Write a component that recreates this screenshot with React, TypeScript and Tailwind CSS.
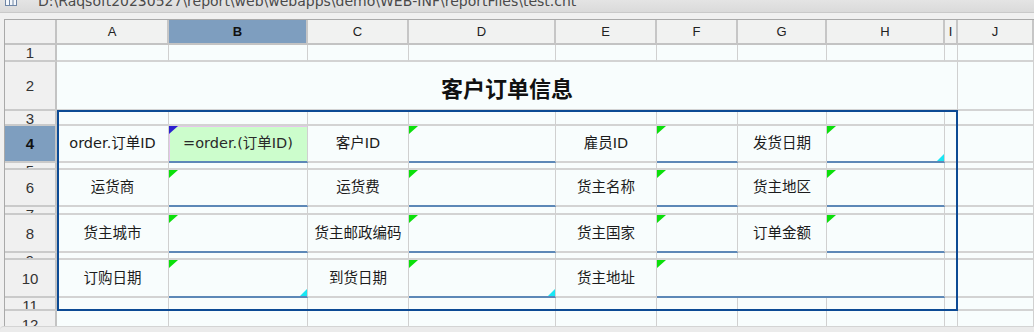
import React from 'react';

type Cell =
  | { k: 'e' }
  | { k: 'l'; t: string }
  | { k: 'v'; cyan?: boolean; span3?: boolean }
  | { k: 'title' }
  | { k: 'f' };

const E: Cell = { k: 'e' };
const L = (t: string): Cell => ({ k: 'l', t });
const V = (o: { cyan?: boolean; span3?: boolean } = {}): Cell => ({ k: 'v', ...o });
const empties = (n: number): Cell[] => Array.from({ length: n }, () => E);

const rows: { n: string; sel?: boolean; cells: Cell[] }[] = [
  { n: '1', cells: empties(10) },
  { n: '2', cells: [{ k: 'title' }, E] },
  { n: '3', cells: empties(10) },
  {
    n: '4',
    sel: true,
    cells: [L('order.订单ID'), { k: 'f' }, L('客户ID'), V(), L('雇员ID'), V(), L('发货日期'), V({ cyan: true }), E, E],
  },
  { n: '5', cells: empties(10) },
  { n: '6', cells: [L('运货商'), V(), L('运货费'), V(), L('货主名称'), V(), L('货主地区'), V(), E, E] },
  { n: '7', cells: empties(10) },
  { n: '8', cells: [L('货主城市'), V(), L('货主邮政编码'), V(), L('货主国家'), V(), L('订单金额'), V(), E, E] },
  { n: '9', cells: empties(10) },
  {
    n: '10',
    cells: [L('订购日期'), V({ cyan: true }), L('到货日期'), V({ cyan: true }), L('货主地址'), V({ span3: true }), E, E],
  },
  { n: '11', cells: empties(10) },
  { n: '12', cells: empties(10) },
];

const colLetters = ['A', 'B', 'C', 'D', 'E', 'F', 'G', 'H', 'I', 'J'];

const GRID =
  'grid grid-cols-[52px_112px_139px_101px_147px_101px_81px_89px_118px_13px_76px] grid-rows-[25px_17px_49px_15px_37px_7px_37px_8px_38px_7px_38px_13px_28px]';

const base = 'border-r border-r-[#d0d0d0] border-b-2 border-b-[#d3d3d3] bg-[#f8fdfd]';
const labelFont = { fontFamily: '"DejaVu Sans", "Noto Sans CJK SC", sans-serif' };

function GreenTri({ color = 'green' }: { color?: 'green' | 'blue' }) {
  return (
    <span
      className={
        color === 'green'
          ? 'absolute left-0 top-0 h-0 w-0 border-t-[8px] border-t-[#0be00b] border-r-[9px] border-r-transparent'
          : 'absolute left-0 top-0 h-0 w-0 border-t-[8px] border-t-[#2b1fcf] border-r-[9px] border-r-transparent'
      }
    />
  );
}

function CyanTri() {
  return (
    <span className="absolute right-0 bottom-0 h-0 w-0 border-b-[7px] border-b-[#18e6f4] border-l-[7px] border-l-transparent" />
  );
}

function BodyCell({ c }: { c: Cell }) {
  if (c.k === 'e') return <div className={base} />;
  if (c.k === 'title')
    return (
      <div className={`${base} col-span-9 flex items-center justify-center pt-[2px]`}>
        <span
          className="text-[22px] font-bold leading-none text-[#111]"
          style={{ fontFamily: '"Noto Sans CJK SC", sans-serif' }}
        >
          客户订单信息
        </span>
      </div>
    );
  if (c.k === 'l')
    return (
      <div className={`${base} flex items-center justify-center overflow-hidden`}>
        <span className="whitespace-nowrap text-[14.5px] leading-none text-[#1c1c1c]" style={labelFont}>
          {c.t}
        </span>
      </div>
    );
  if (c.k === 'f')
    return (
      <div className="relative flex items-center justify-center border-r border-r-[#d0d0d0] border-b-2 border-b-[#5d88b7] bg-[#ccfdcc] shadow-[inset_1px_1px_0_#e6c6ec]">
        <GreenTri color="blue" />
        <span className="whitespace-nowrap text-[14.5px] leading-none text-[#2a2a2a]" style={labelFont}>
          =order.(订单ID)
        </span>
      </div>
    );
  return (
    <div
      className={`relative border-r border-r-[#d0d0d0] border-b-2 border-b-[#5d88b7] bg-[#f8fdfd] ${
        c.span3 ? 'col-span-3' : ''
      }`}
    >
      <GreenTri />
      {c.cyan && <CyanTri />}
    </div>
  );
}

export default function App() {
  return (
    <div
      className="flex h-[332px] w-[1034px] flex-col overflow-hidden bg-[#efefef]"
      style={{ fontFamily: '"Liberation Sans", Arial, sans-serif' }}
    >
      {/* title bar */}
      <div className="flex h-[13px] shrink-0 items-start overflow-hidden border-b border-b-[#c9c9c9] bg-gradient-to-b from-[#e4e4e4] to-[#dadada]">
        <svg className="ml-[5px] mt-[-5px] shrink-0" width="12" height="12" viewBox="0 0 12 12">
          <rect x="0.5" y="0.5" width="11" height="10" fill="#f4f7fb" stroke="#6f86a6" />
          <line x1="4.5" y1="1" x2="4.5" y2="10.5" stroke="#6f86a6" />
          <line x1="8" y1="1" x2="8" y2="10.5" stroke="#6f86a6" />
        </svg>
        <span
          className="ml-[21px] mt-[-6px] whitespace-nowrap text-[14px] leading-[14px] text-[#4a4a4a]"
          style={{ fontFamily: '"DejaVu Sans", sans-serif' }}
        >
          D:\Raqsoft20230527\report\web\webapps\demo\WEB-INF\reportFiles\test.cnt
        </span>
      </div>
      <div className="h-[6px] shrink-0 bg-[#f0f0f0]" />
      {/* sheet */}
      <div className="flex h-[307px] shrink-0 overflow-hidden">
        <div className="w-[4px] shrink-0 bg-[#f0f0f0]" />
        <div className="relative h-[307px] border-l border-t border-l-[#a9a9a9] border-t-[#a9a9a9]">
          <div className={GRID}>
            {/* header row */}
            <div className="border-r-2 border-b-2 border-r-[#c3c3c3] border-b-[#c3c3c3] bg-[#f0f0f0]" />
            {colLetters.map((l) => (
              <div
                key={l}
                className={`flex items-center justify-center border-r-2 border-b-2 border-r-[#c6c6c6] border-b-[#c3c3c3] text-[13px] leading-none ${
                  l === 'B' ? 'bg-[#7e9ebf] font-bold text-[#111]' : 'bg-[#f1f2f1] text-[#222]'
                }`}
              >
                {l}
              </div>
            ))}
            {rows.map((r) => (
              <React.Fragment key={r.n}>
                <div
                  className={`flex justify-center overflow-hidden border-r-2 border-b-2 border-r-[#c3c3c3] border-b-[#cacaca] [align-items:safe_center] ${
                    r.sel ? 'bg-[#7e9ebf] font-bold text-[#111]' : 'bg-[#f0f0f0] text-[#333]'
                  }`}
                >
                  <span className="text-[15px] leading-[15px]">{r.n}</span>
                </div>
                {r.cells.map((c, i) => (
                  <BodyCell key={i} c={c} />
                ))}
              </React.Fragment>
            ))}
          </div>
          {/* selection outline overlay on the same grid */}
          <div className={`pointer-events-none absolute inset-0 ${GRID}`}>
            <div className="col-start-2 col-end-11 row-start-4 row-end-13 -mt-px border-2 border-[#0c4a94]" />
          </div>
        </div>
      </div>
      {/* bottom strip */}
      <div className="h-[6px] shrink-0 rounded-tl-[4px] border-t border-t-[#d4d4d4] bg-[#ebebeb]" />
    </div>
  );
}
